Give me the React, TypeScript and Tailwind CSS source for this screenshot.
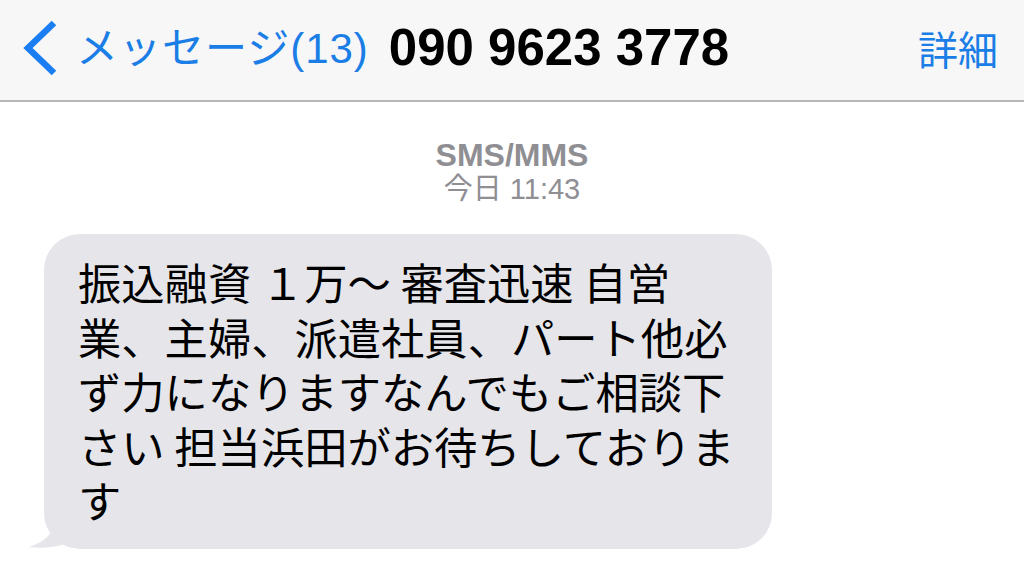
import { FC } from 'react';

const lines = [
  '振込融資 １万～ 審査迅速 自営',
  '業、主婦、派遣社員、パート他必',
  'ず力になりますなんでもご相談下',
  'さい 担当浜田がお待ちしておりま',
  'す',
];

const NavBar: FC = () => {
  return (
    <header className="h-[102px] bg-[#f7f7f7] border-b-2 border-[#b8b8b8] flex items-center">
      <svg className="ml-[20px] mb-[4px]" width="40" height="58" viewBox="0 0 40 58">
        <polyline
          points="34,4 8,29 34,54"
          fill="none"
          stroke="#1a7ef2"
          strokeWidth="6.5"
          strokeLinecap="butt"
          strokeLinejoin="miter"
        />
      </svg>
      <span className="ml-[16px] mb-[4px] text-[42px] text-[#1a7ee6] tracking-[1px] [font-family:'Liberation_Sans','Noto_Sans_CJK_JP',sans-serif]">
        メッセージ(13)
      </span>
      <span className="ml-[20px] mb-[4px] text-[51px] font-bold text-black [font-family:'Liberation_Sans',sans-serif]">
        090 9623 3778
      </span>
      <div className="flex-1" />
      <span className="mr-[26px] mb-[4px] text-[40px] text-[#1a7ee6] [font-family:'Noto_Sans_CJK_JP',sans-serif]">
        詳細
      </span>
    </header>
  );
};

const App: FC = () => {
  return (
    <div className="w-[1024px] h-[575px] bg-white overflow-hidden">
      <NavBar />
      <div className="flex flex-col items-center mt-[36px] text-[#8e8e93] leading-[34px]">
        <span className="text-[32px] font-semibold [font-family:'Liberation_Sans',sans-serif]">SMS/MMS</span>
        <span className="text-[29px] [font-family:'Liberation_Sans','Noto_Sans_CJK_JP',sans-serif]">今日 11:43</span>
      </div>
      <div className="relative ml-[44px] mt-[28px] w-[728px]">
        {/* bubble tail */}
        <svg className="absolute left-[-16px] bottom-0" width="60" height="60" viewBox="0 0 60 60">
          <path d="M28 0 L28 30 Q26 50 1 58 Q34 62 56 44 L56 0 Z" fill="#e5e5ea" />
        </svg>
        <div className="relative bg-[#e5e5ea] rounded-[36px] pl-[34px] pr-[20px] pt-[20px] pb-[22px] text-[43.3px] leading-[54.5px] text-black [font-family:'Noto_Sans_CJK_JP',sans-serif] whitespace-nowrap">
          {lines.map((l) => (
            <div key={l}>{l}</div>
          ))}
        </div>
      </div>
    </div>
  );
};

export default App;
